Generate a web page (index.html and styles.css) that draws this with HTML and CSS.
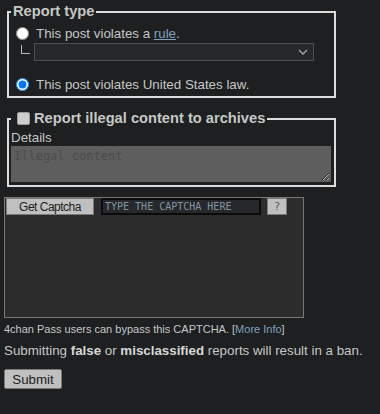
FILE: index.html
```html
<!DOCTYPE html>
<html lang="en">
<head>
  <meta charset="UTF-8" />
  <title>Report</title>
  <link rel="stylesheet" href="styles.css">
</head>
<body>
  <form class="report">
    <fieldset class="box">
      <legend>Report type</legend>
      <label class="row">
        <input type="radio" name="cat" value="rule" />
        <span>This post violates a <a href="#">rule</a>.</span>
      </label>
      <div class="sub">
        <span class="corner"></span>
        <div class="pick">
          <select class="rules"><option></option></select>
          <svg class="chev" width="10" height="6" viewBox="0 0 10 6"><path d="M1 1 L5 5 L9 1" fill="none" stroke="#9a9a9a" stroke-width="1.6"/></svg>
        </div>
      </div>
      <label class="row law">
        <input type="radio" name="cat" value="law" checked />
        <span>This post violates United States law.</span>
      </label>
    </fieldset>

    <fieldset class="box illegal">
      <legend><input type="checkbox" class="chk" /><span>Report illegal content to archives</span></legend>
      <label class="details" for="details">Details</label>
      <textarea id="details" placeholder="Illegal content"></textarea>
    </fieldset>

    <div class="captcha">
      <div class="cap-row">
        <button type="button" class="btn get">Get Captcha</button>
        <input type="text" class="cap-input" placeholder="TYPE THE CAPTCHA HERE" />
        <button type="button" class="btn help">?</button>
      </div>
    </div>

    <p class="pass">4chan Pass users can bypass this CAPTCHA. [<a href="#">More Info</a>]</p>
    <p class="warn">Submitting <b>false</b> or <b>misclassified</b> reports will result in a ban.</p>
    <button type="submit" class="btn submit">Submit</button>
  </form>
</body>
</html>
```

FILE: styles.css
```css
body {
  margin: 0;
  padding: 3px 4px 0;
  background: #1d1f21;
  color: #c5c8c6;
  font-family: "Liberation Sans", Arial, sans-serif;
  font-size: 13.33px;
}
a {
  color: #81a2be;
}
.box {
  box-sizing: border-box;
  width: 329px;
  margin: 0 0 0 3px;
  padding: 3px 2px 2px;
  border: 2px solid #dcdcdc;
}
.box legend {
  padding: 0 2px;
  font-size: 14.67px;
  font-weight: bold;
  line-height: 17px;
}
.row {
  display: flex;
  align-items: center;
  height: 20px;
}
.row input {
  margin: 0 7px 0 5px;
}
.law {
  margin-top: 13px;
}
.sub {
  display: flex;
  height: 18px;
}
.corner {
  width: 8px;
  height: 8px;
  margin: 2px 0 0 10px;
  border-left: 1px solid #b8b8b8;
  border-bottom: 1px solid #b8b8b8;
}
.pick {
  position: relative;
  margin-left: 4px;
}
.rules {
  appearance: none;
  box-sizing: border-box;
  width: 280px;
  height: 18px;
  margin: 0;
  background: #26282c;
  border: 1px solid #4b4d50;
  color: #c5c8c6;
}
.chev {
  position: absolute;
  right: 6px;
  top: 6px;
  pointer-events: none;
}
.illegal {
  margin-top: 12px;
  padding: 3px 2px 3px;
}
.illegal legend {
  display: flex;
  align-items: center;
}
.chk {
  appearance: none;
  box-sizing: border-box;
  width: 13px;
  height: 13px;
  margin: 0 4px 0 4px;
  background: #cdcdcd;
  border: 1px solid #9c9c9c;
  border-radius: 2px;
}
.details {
  display: block;
  line-height: 15px;
}
textarea {
  display: block;
  box-sizing: border-box;
  width: 320px;
  height: 36px;
  margin: 1px 0 0;
  padding: 2px;
  background: #5e5e5e;
  border: 1px solid #5e5e5e;
  color: #ddd;
  font-family: "DejaVu Sans Mono", monospace;
  font-size: 12px;
}
textarea::placeholder {
  color: #4c4c4c;
}
.captcha {
  box-sizing: border-box;
  width: 300px;
  height: 121px;
  margin-top: 10px;
  background: #2c2c2c;
  border: 1px solid #777;
}
.cap-row {
  display: flex;
  padding-left: 1px;
}
.btn {
  box-sizing: border-box;
  margin: 0;
  padding: 0;
  background: #c0c0c0;
  border: 1px solid #7a7a7a;
  color: #1d1d1d;
  font-family: "Liberation Sans", Arial, sans-serif;
}
.get {
  width: 88px;
  height: 17px;
  font-size: 12px;
  letter-spacing: -0.5px;
}
.cap-input {
  box-sizing: border-box;
  width: 160px;
  height: 17px;
  margin: 0 0 0 7px;
  padding: 0 2px;
  background: #26282c;
  border: 2px solid #0b0b0b;
  color: #c5c8c6;
  font-family: "DejaVu Sans Mono", monospace;
  font-size: 10px;
}
.cap-input::placeholder {
  color: #8394a2;
}
.help {
  width: 20px;
  height: 17px;
  margin-left: 6px;
  color: #5a5a5a;
  font-family: "DejaVu Sans Mono", monospace;
  font-size: 11px;
}
.pass {
  margin: 5px 0 0;
  font-size: 11px;
}
.pass a {
  text-decoration: none;
}
.warn {
  margin: 8px 0 0;
  line-height: 16px;
}
.warn b {
  color: #d6d8d6;
}
.submit {
  width: 58px;
  height: 20px;
  margin-top: 10px;
  border-radius: 2px;
  font-size: 13.33px;
}
```
